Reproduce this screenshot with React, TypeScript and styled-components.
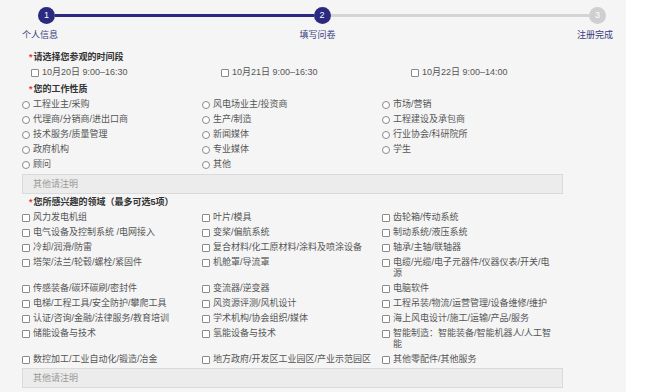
import styled, {createGlobalStyle} from 'styled-components'

const GlobalStyle = createGlobalStyle`
    html, body {
        margin: 0;
        padding: 0;
        background: #ffffff;
    }
    body {
        font-family: "Liberation Sans", "Noto Sans CJK SC", sans-serif;
        font-size: 9px;
        color: #555;
    }
`;

const NAVY = '#2a2a80';

const Page = styled.div`
    width: 626px;
    height: 392px;
    background: #f5f5f5;
    overflow: hidden;
`;

/* Stepper */
const Stepper = styled.div`
    padding-top: 7px;
    height: 50px;
    box-sizing: border-box;
`;

const Track = styled.div`
    display: flex;
    align-items: center;
    margin-left: 38px;
    width: 568px;
`;

const Dot = styled.div<{ $active: boolean }>`
    width: 17px;
    height: 17px;
    border-radius: 50%;
    flex-shrink: 0;
    background: ${p => (p.$active ? NAVY : '#cfcfcf')};
    color: #fff;
    font-size: 9px;
    line-height: 17px;
    text-align: center;
`;

const Bar = styled.div<{ $active: boolean }>`
    flex: 1;
    height: 3px;
    background: ${p => (p.$active ? NAVY : '#d4d4d4')};
`;

const Labels = styled.div`
    display: flex;
    justify-content: space-between;
    margin: 5px 13px 0 22px;
    line-height: 12px;
    color: #3b3b82;
`;

/* Form */
const Form = styled.div`
    padding-left: 22px;
    width: 541px;
`;

const Heading = styled.div<{ $top?: number }>`
    margin-top: ${p => p.$top || 0}px;
    padding: 2px 0 2px 7px;
    line-height: 11px;
    color: #333;
    font-weight: 600;
    &::before {
        content: '*';
        color: #e53935;
        margin-right: 1px;
    }
`;

const Grid = styled.div<{ $col: number; $indent?: number }>`
    display: grid;
    grid-template-columns: repeat(3, ${p => p.$col}px);
    margin-left: ${p => p.$indent || 0}px;
`;

const Option = styled.label`
    display: flex;
    align-items: flex-start;
    padding: 2px 6px 2px 0;
    line-height: 11px;
    color: #555;
`;

const Mark = styled.span<{ $round?: boolean }>`
    flex-shrink: 0;
    width: 6px;
    height: 6px;
    margin: 2px 3px 0 0;
    border: 1px solid #8a8a8a;
    border-radius: ${p => (p.$round ? '50%' : '1px')};
    background: #fff;
`;

const Other = styled.div<{ $top: number }>`
    margin-top: ${p => p.$top}px;
    height: 20px;
    box-sizing: border-box;
    border: 1px solid #dadada;
    background: #ececec;
    color: #9a9a9a;
    line-height: 18px;
    padding-left: 10px;
`;

const times = ['10月20日 9:00–16:30', '10月21日 9:00–16:30', '10月22日 9:00–14:00'];

const jobs = [
    '工程业主/采购', '风电场业主/投资商', '市场/营销',
    '代理商/分销商/进出口商', '生产/制造', '工程建设及承包商',
    '技术服务/质量管理', '新闻媒体', '行业协会/科研院所',
    '政府机构', '专业媒体', '学生',
    '顾问', '其他',
];

const fields = [
    '风力发电机组', '叶片/模具', '齿轮箱/传动系统',
    '电气设备及控制系统 /电网接入', '变桨/偏航系统', '制动系统/液压系统',
    '冷却/润滑/防雷', '复合材料/化工原材料/涂料及喷涂设备', '轴承/主轴/联轴器',
    '塔架/法兰/轮毂/螺栓/紧固件', '机舱罩/导流罩', '电缆/光缆/电子元器件/仪器仪表/开关/电源',
    '传感装备/碳环碳刷/密封件', '变流器/逆变器', '电脑软件',
    '电梯/工程工具/安全防护/攀爬工具', '风资源评测/风机设计', '工程吊装/物流/运营管理/设备维修/维护',
    '认证/咨询/金融/法律服务/教育培训', '学术机构/协会组织/媒体', '海上风电设计/施工/运输/产品/服务',
    '储能设备与技术', '氢能设备与技术', '智能制造：智能装备/智能机器人/人工智能',
    '数控加工/工业自动化/锻造/冶金', '地方政府/开发区工业园区/产业示范园区', '其他零配件/其他服务',
];

export default function App() {
    return (
        <Page>
            <GlobalStyle/>
            <Stepper>
                <Track>
                    <Dot $active>1</Dot>
                    <Bar $active/>
                    <Dot $active>2</Dot>
                    <Bar $active={false}/>
                    <Dot $active={false}>3</Dot>
                </Track>
                <Labels>
                    <span>个人信息</span>
                    <span>填写问卷</span>
                    <span>注册完成</span>
                </Labels>
            </Stepper>
            <Form>
                <Heading>请选择您参观的时间段</Heading>
                <Grid $col={190} $indent={9}>
                    {times.map(t => <Option key={t}><Mark/>{t}</Option>)}
                </Grid>
                <Heading $top={2}>您的工作性质</Heading>
                <Grid $col={180}>
                    {jobs.map(j => <Option key={j}><Mark $round/>{j}</Option>)}
                </Grid>
                <Other $top={2}>其他请注明</Other>
                <Heading $top={1}>您所感兴趣的领域（最多可选5项）</Heading>
                <Grid $col={180}>
                    {fields.map(f => <Option key={f}><Mark/>{f}</Option>)}
                </Grid>
                <Other $top={1}>其他请注明</Other>
            </Form>
        </Page>
    );
}
